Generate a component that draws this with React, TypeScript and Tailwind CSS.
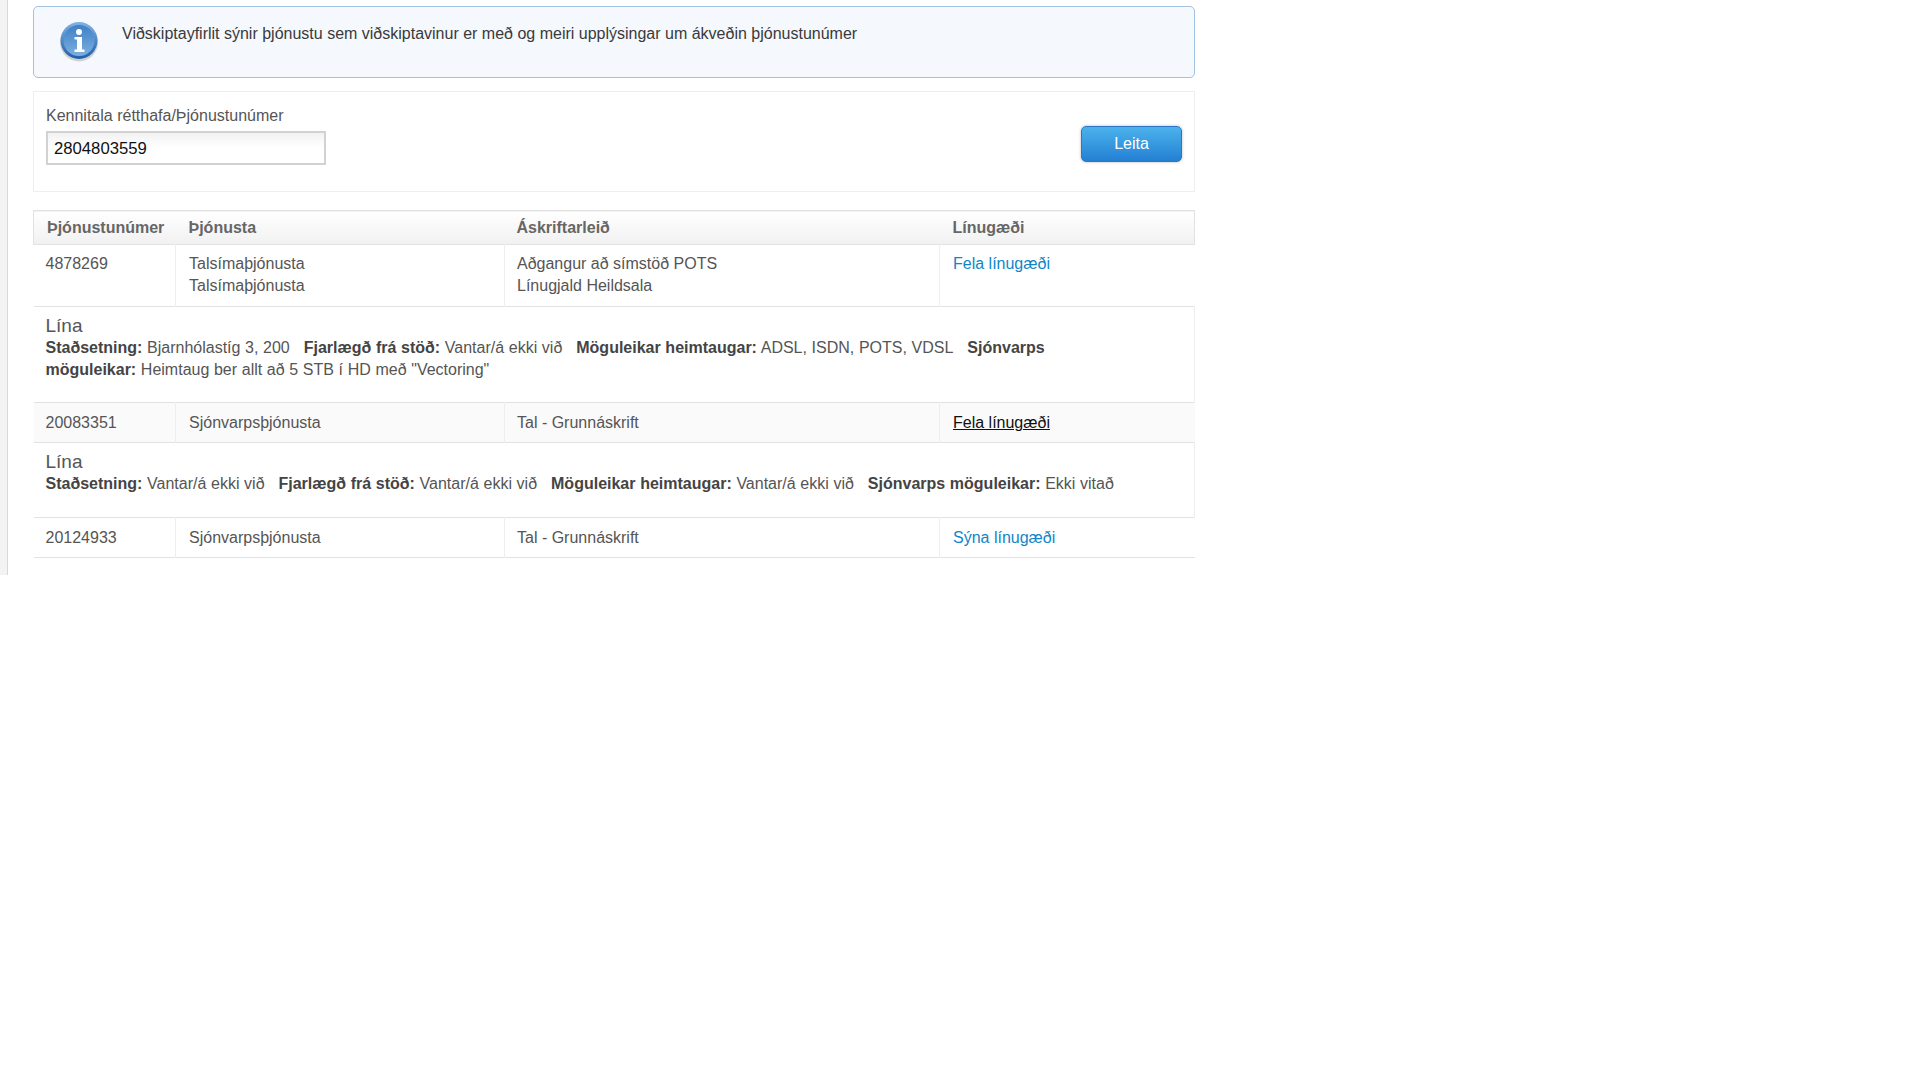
import React from 'react';

const InfoIcon = () => (
    <svg width="40" height="42" viewBox="0 0 40 42">
        <defs>
            <linearGradient id="ring" x1="0" y1="0" x2="0" y2="1">
                <stop offset="0" stopColor="#7fb2e4" />
                <stop offset="1" stopColor="#1f5fa8" />
            </linearGradient>
            <linearGradient id="disc" x1="0" y1="0" x2="0" y2="1">
                <stop offset="0" stopColor="#3f80c6" />
                <stop offset="1" stopColor="#7cafdf" />
            </linearGradient>
        </defs>
        <ellipse cx="20" cy="21.5" rx="19" ry="19" fill="#8a8a8a" opacity="0.35" />
        <circle cx="20" cy="19.5" r="18.5" fill="url(#ring)" />
        <circle cx="20" cy="19.5" r="15.5" fill="url(#disc)" />
        <circle cx="20" cy="11" r="3" fill="#fff" />
        <path d="M15.5 16h7.500v12.500h2.500V31h-10v-2.500H18V18.500h-2.500z" fill="#fff" />
    </svg>
);

const Row = ({ num, services, plans, link, linkClass, shaded, pad }: {
    num: string;
    services: string[];
    plans: string[];
    link: string;
    linkClass: string;
    shaded?: boolean;
    pad: string;
}) => (
    <tr className={`border-b border-[#e2e2e2] align-top ${shaded ? 'bg-[#fafafa]' : 'bg-white'}`}>
        <td className={`pl-3 border-r border-[#eeeeee] ${pad}`}>{num}</td>
        <td className={`pl-[13px] border-r border-[#eeeeee] ${pad}`}>
            {services.map((s, i) => <div key={i}>{s}</div>)}
        </td>
        <td className={`pl-3 border-r border-[#eeeeee] ${pad}`}>
            {plans.map((s, i) => <div key={i}>{s}</div>)}
        </td>
        <td className={`pl-[13px] ${pad}`}>
            <a href="#" className={linkClass}>{link}</a>
        </td>
    </tr>
);

const Detail = ({ children, pad }: { children: React.ReactNode; pad: string }) => (
    <tr className="border-b border-[#e2e2e2]">
        <td colSpan={4} className={`pl-3 pr-[70px] pt-[8px] border-r border-[#eeeeee] ${pad}`}>
            <div className="text-[19px] leading-[22px]">Lína</div>
            <div className="leading-[22px] [word-spacing:0.2px]">{children}</div>
        </td>
    </tr>
);

const Field = ({ label, value }: { label: string; value: string }) => (
    <>
        <b className="text-[#444444]">{label}</b> {value}&nbsp;&nbsp;{' '}
    </>
);

export default function App() {
    return (
        <div className="min-h-[1080px] bg-white font-['Liberation_Sans',Arial,sans-serif] text-[16px] leading-[22px] text-[#555555]">
            <div className="flex h-[575px]">
                <div className="w-2 shrink-0 bg-[#f3f3f3] border-r border-[#d8d8d8]" />
                <main className="w-[1162px] ml-[25px] pt-[6px]">
                    <div className="flex h-[72px] rounded-[5px] border border-[#a3c1e0] bg-[#f5f8fd]">
                        <div className="ml-[25px] mt-[14px]"><InfoIcon /></div>
                        <p className="ml-[23px] mt-[16px] text-[#3a3a3a]">Viðskiptayfirlit sýnir þjónustu sem viðskiptavinur er með og meiri upplýsingar um ákveðin þjónustunúmer</p>
                    </div>

                    <div className="flex justify-between mt-[13px] h-[101px] border border-[#eeeeee] bg-white pl-3 pr-[12px]">
                        <div className="pt-[13px]">
                            <label className="block text-[#555555]">Kennitala rétthafa/Þjónustunúmer</label>
                            <input
                                readOnly
                                value="2804803559"
                                className="block mt-[4px] w-[280px] h-[34px] border-2 border-[#d2d2d2] bg-gradient-to-b from-[#f2f2f2] to-white to-50% px-[6px] pt-[1px] text-[#111111] text-[16.7px] outline-none"
                            />
                        </div>
                        <button className="self-start mt-[34px] w-[101px] h-[36px] rounded-[5px] border border-[#2a77c4] bg-gradient-to-b from-[#4bb2ec] to-[#2480d3] text-white shadow-[0_0_3px_rgba(0,0,0,0.3)]">
                            Leita
                        </button>
                    </div>

                    <table className="mt-[18px] w-full table-fixed border-collapse">
                        <colgroup>
                            <col className="w-[142px]" />
                            <col className="w-[329px]" />
                            <col className="w-[435px]" />
                            <col />
                        </colgroup>
                        <thead>
                            <tr className="h-[34px] border border-[#e2e2e2] bg-gradient-to-b from-white to-[#f1f1f1] text-left text-[#666666]">
                                <th className="pl-[13px] font-bold">Þjónustunúmer</th>
                                <th className="pl-[13px] font-bold">Þjónusta</th>
                                <th className="pl-3 font-bold">Áskriftarleið</th>
                                <th className="pl-[13px] font-bold">Línugæði</th>
                            </tr>
                        </thead>
                        <tbody>
                            <Row
                                pad="pt-[8px] pb-[9px]"
                                num="4878269"
                                services={['Talsímaþjónusta', 'Talsímaþjónusta']}
                                plans={['Aðgangur að símstöð POTS', 'Línugjald Heildsala']}
                                link="Fela línugæði"
                                linkClass="text-[#0f86c9]"
                            />
                            <Detail pad="pb-[21px]">
                                <Field label="Staðsetning:" value="Bjarnhólastíg 3, 200" />
                                <Field label="Fjarlægð frá stöð:" value="Vantar/á ekki við" />
                                <Field label="Möguleikar heimtaugar:" value="ADSL, ISDN, POTS, VDSL" />
                                <Field label="Sjónvarps möguleikar:" value={'Heimtaug ber allt að 5 STB í HD með "Vectoring"'} />
                            </Detail>
                            <Row
                                shaded
                                pad="pt-[9px] pb-[8px]"
                                num="20083351"
                                services={['Sjónvarpsþjónusta']}
                                plans={['Tal - Grunnáskrift']}
                                link="Fela línugæði"
                                linkClass="text-[#111111] underline"
                            />
                            <Detail pad="pb-[22px]">
                                <Field label="Staðsetning:" value="Vantar/á ekki við" />
                                <Field label="Fjarlægð frá stöð:" value="Vantar/á ekki við" />
                                <Field label="Möguleikar heimtaugar:" value="Vantar/á ekki við" />
                                <Field label="Sjónvarps möguleikar:" value="Ekki vitað" />
                            </Detail>
                            <Row
                                pad="pt-[9px] pb-[8px]"
                                num="20124933"
                                services={['Sjónvarpsþjónusta']}
                                plans={['Tal - Grunnáskrift']}
                                link="Sýna línugæði"
                                linkClass="text-[#0f86c9]"
                            />
                        </tbody>
                    </table>
                </main>
            </div>
        </div>
    );
}
